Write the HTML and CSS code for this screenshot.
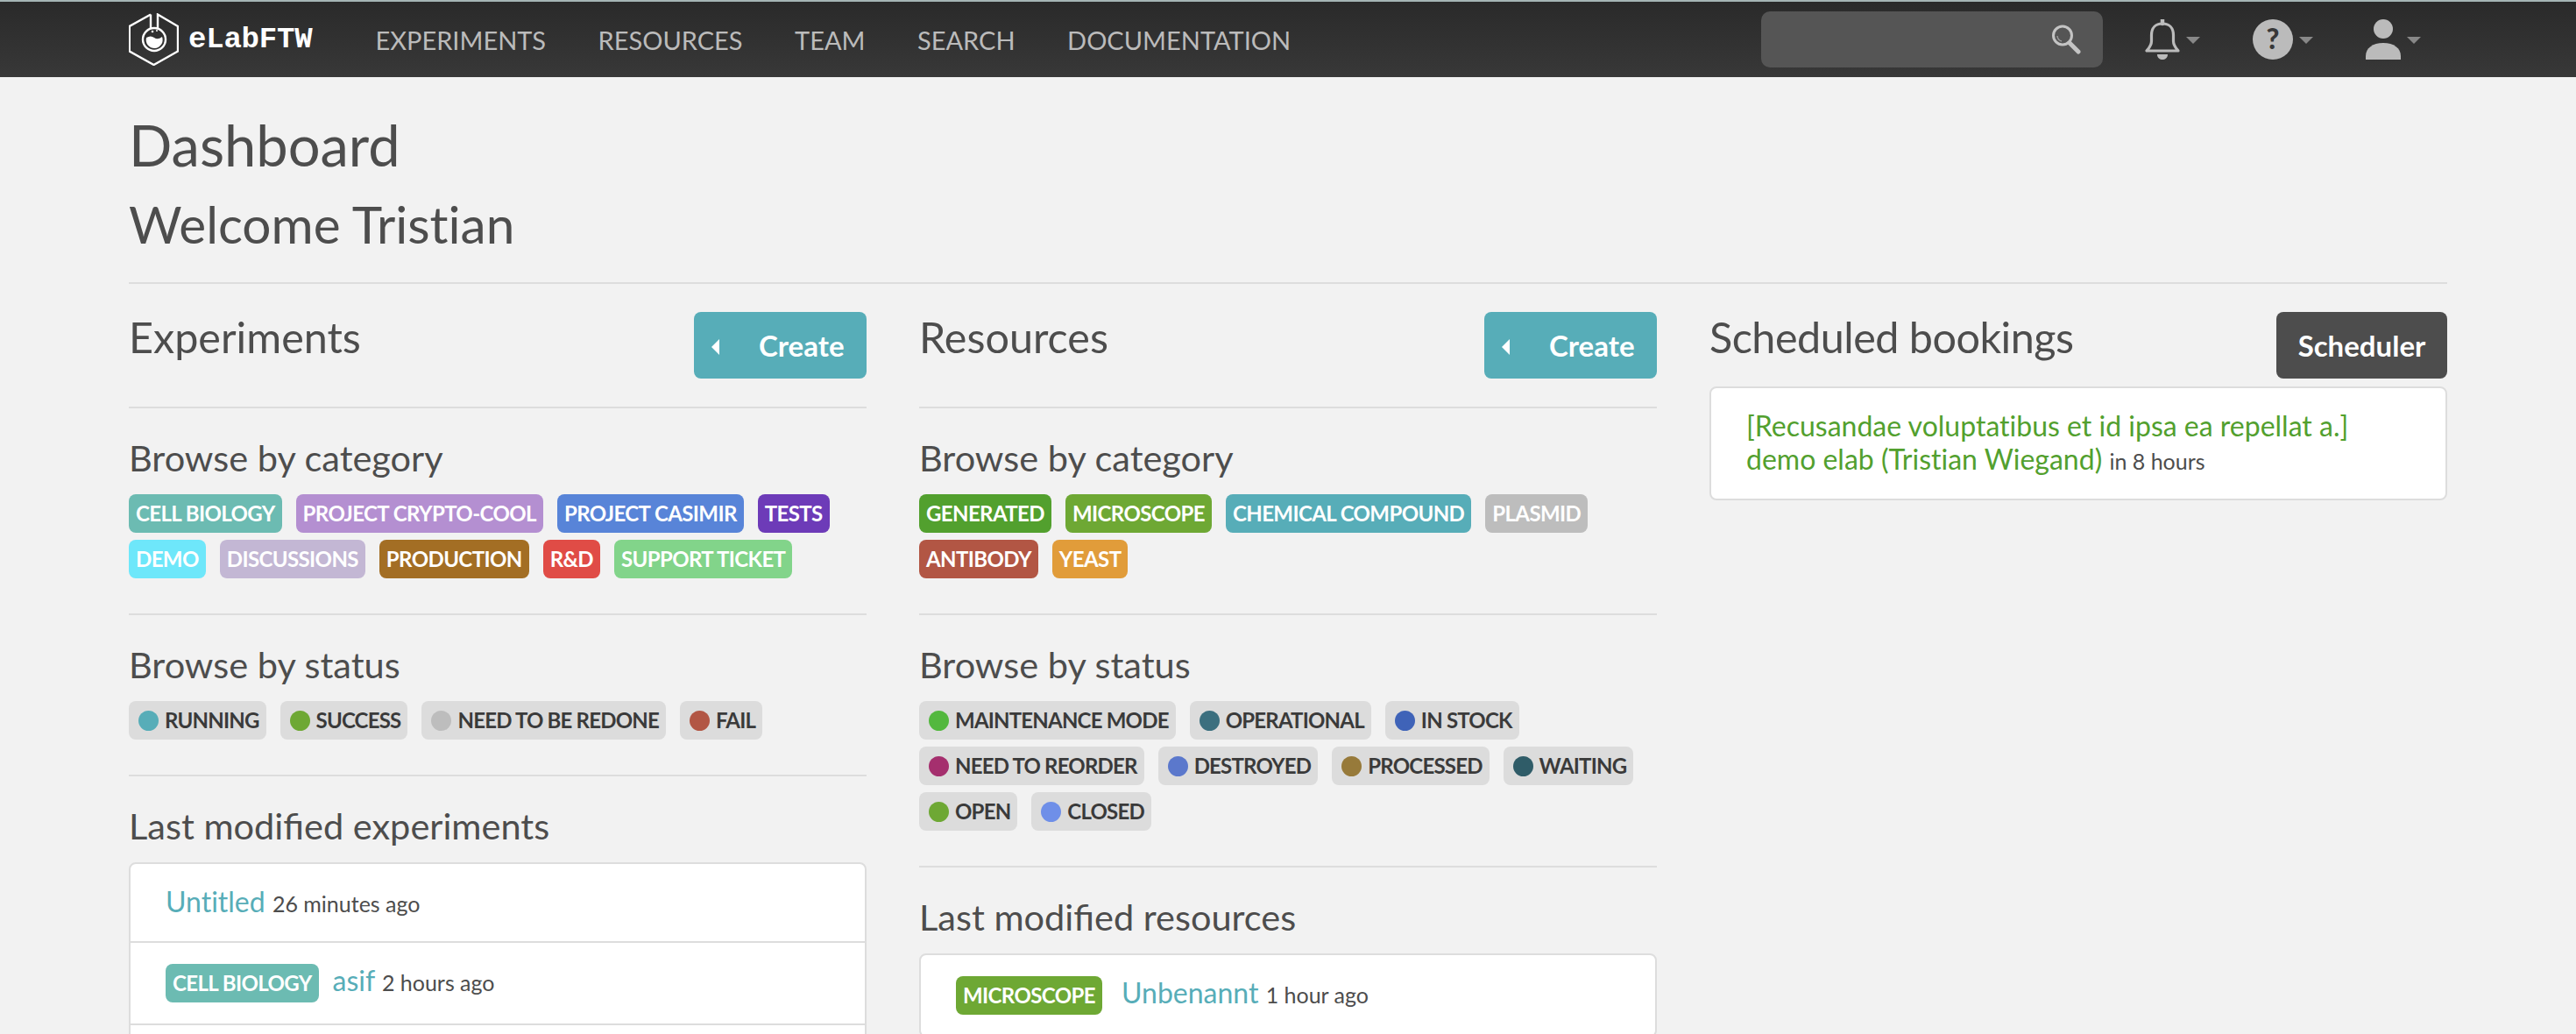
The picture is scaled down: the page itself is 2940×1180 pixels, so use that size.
FILE: index.html
```html
<!DOCTYPE html>
<html lang="en">
<head>
    <meta charset="UTF-8">
    <title>Dashboard - eLabFTW</title>
    <link rel="stylesheet" href="styles.css">
</head>
<body>
    <nav class="navbar">
        <div class="navbar-inner">
            <a class="brand" href="#">
                <svg class="brand-logo" viewBox="0 0 57 60" width="57" height="60" fill="none" stroke="#fff" stroke-width="2.4">
                    <path d="M25 1.5 L0.8 15 V43.5 L28.5 59 L56 43.5 V15 L33 1.5 V18"/>
                    <path d="M25 1.5 V18"/>
                    <circle cx="29" cy="30" r="13"/>
                    <path d="M20 28 Q25 25 29 28 T38 27 A9.5 9.5 0 1 1 20 28 Z" fill="#fff" stroke="none"/>
                    <circle cx="27" cy="21" r="1.3" fill="#fff" stroke="none"/>
                    <circle cx="32" cy="20" r="1" fill="#fff" stroke="none"/>
                </svg>
                <span class="brand-name">eLabFTW</span>
            </a>
            <ul class="nav-links">
                <li><a href="#">EXPERIMENTS</a></li>
                <li><a href="#">RESOURCES</a></li>
                <li><a href="#">TEAM</a></li>
                <li><a href="#">SEARCH</a></li>
                <li><a href="#">DOCUMENTATION</a></li>
            </ul>
            <div class="nav-right">
                <div class="search-box">
                    <svg viewBox="0 0 34 34" width="34" height="34" fill="none" stroke="#c4c4c4">
                        <circle cx="13" cy="12.5" r="10.5" stroke-width="3"/>
                        <path d="M7 13 Q7.500 18 12 19" stroke-width="1.500" stroke="#999"/>
                        <path d="M21 21 L31 31" stroke-width="5" stroke-linecap="round"/>
                    </svg>
                </div>
                <div class="dropdown">
                    <svg viewBox="0 0 40 46" width="40" height="46" fill="none" stroke="#bbb" stroke-width="3.200">
                        <path d="M20 5 C12 5 7.500 10 7.500 18 V25 C7.500 30 4.500 33 2 36 H38 C35.500 33 32.500 30 32.500 25 V18 C32.500 10 28 5 20 5 Z" stroke-linejoin="round"/>
                        <path d="M20 0 V5" stroke-width="4.500" stroke-linecap="round"/>
                        <path d="M14 40 H26 C26 44 23 46 20 46 C17 46 14 44 14 40 Z" fill="#bbb" stroke="none"/>
                    </svg>
                    <span class="caret"></span>
                </div>
                <div class="dropdown">
                    <svg viewBox="0 0 46 46" width="46" height="46">
                        <circle cx="23" cy="23" r="23" fill="#bbb"/>
                        <text x="23" y="34" text-anchor="middle" class="help-mark">?</text>
                    </svg>
                    <span class="caret"></span>
                </div>
                <div class="dropdown">
                    <svg viewBox="0 0 40 46" width="40" height="46" fill="#bbb">
                        <ellipse cx="20" cy="11" rx="11" ry="11"/>
                        <path d="M0 46 V42 C0 33 8 27 20 27 C32 27 40 33 40 42 V46 Z"/>
                    </svg>
                    <span class="caret"></span>
                </div>
            </div>
        </div>
    </nav>

    <main class="container">
        <h1 class="page-title">Dashboard</h1>
        <h2 class="welcome">Welcome Tristian</h2>

        <div class="columns">
            <div class="col">
                <section class="section section-head">
                    <h3 class="col-title">Experiments</h3>
                    <a class="btn btn-create" href="#"><span class="caret-left"></span>Create</a>
                </section>
                <section class="section">
                    <h4 class="sub-title">Browse by category</h4>
                    <div class="badges">
                        <a class="badge c-cell" href="#">CELL BIOLOGY</a>
                        <a class="badge c-crypto" href="#">PROJECT CRYPTO-COOL</a>
                        <a class="badge c-casimir" href="#">PROJECT CASIMIR</a>
                        <a class="badge c-tests" href="#">TESTS</a>
                        <a class="badge c-demo" href="#">DEMO</a>
                        <a class="badge c-discussions" href="#">DISCUSSIONS</a>
                        <a class="badge c-production" href="#">PRODUCTION</a>
                        <a class="badge c-rd" href="#">R&amp;D</a>
                        <a class="badge c-support" href="#">SUPPORT TICKET</a>
                    </div>
                </section>
                <section class="section">
                    <h4 class="sub-title">Browse by status</h4>
                    <div class="badges">
                        <a class="status" href="#"><span class="dot d-teal"></span>RUNNING</a>
                        <a class="status" href="#"><span class="dot d-leaf"></span>SUCCESS</a>
                        <a class="status" href="#"><span class="dot d-grey"></span>NEED TO BE REDONE</a>
                        <a class="status" href="#"><span class="dot d-brick"></span>FAIL</a>
                    </div>
                </section>
                <section class="section section-last">
                    <h4 class="sub-title">Last modified experiments</h4>
                    <ul class="list">
                        <li class="list-item"><a class="item-link" href="#">Untitled</a> <span class="item-time">26 minutes ago</span></li>
                        <li class="list-item"><a class="badge c-cell" href="#">CELL BIOLOGY</a><a class="item-link" href="#">asif</a> <span class="item-time">2 hours ago</span></li>
                        <li class="list-item list-item-empty"></li>
                    </ul>
                </section>
            </div>

            <div class="col">
                <section class="section section-head">
                    <h3 class="col-title">Resources</h3>
                    <a class="btn btn-create" href="#"><span class="caret-left"></span>Create</a>
                </section>
                <section class="section">
                    <h4 class="sub-title">Browse by category</h4>
                    <div class="badges">
                        <a class="badge c-generated" href="#">GENERATED</a>
                        <a class="badge c-microscope" href="#">MICROSCOPE</a>
                        <a class="badge c-chemical" href="#">CHEMICAL COMPOUND</a>
                        <a class="badge c-plasmid" href="#">PLASMID</a>
                        <a class="badge c-antibody" href="#">ANTIBODY</a>
                        <a class="badge c-yeast" href="#">YEAST</a>
                    </div>
                </section>
                <section class="section">
                    <h4 class="sub-title">Browse by status</h4>
                    <div class="badges">
                        <a class="status" href="#"><span class="dot d-green"></span>MAINTENANCE MODE</a>
                        <a class="status" href="#"><span class="dot d-petrol"></span>OPERATIONAL</a>
                        <a class="status" href="#"><span class="dot d-blue"></span>IN STOCK</a>
                        <a class="status" href="#"><span class="dot d-plum"></span>NEED TO REORDER</a>
                        <a class="status" href="#"><span class="dot d-indigo"></span>DESTROYED</a>
                        <a class="status" href="#"><span class="dot d-ochre"></span>PROCESSED</a>
                        <a class="status" href="#"><span class="dot d-deep"></span>WAITING</a>
                        <a class="status" href="#"><span class="dot d-leaf"></span>OPEN</a>
                        <a class="status" href="#"><span class="dot d-sky"></span>CLOSED</a>
                    </div>
                </section>
                <section class="section section-last">
                    <h4 class="sub-title">Last modified resources</h4>
                    <ul class="list">
                        <li class="list-item"><a class="badge c-microscope" href="#">MICROSCOPE</a><a class="item-link" href="#">Unbenannt</a> <span class="item-time">1 hour ago</span></li>
                    </ul>
                </section>
            </div>

            <div class="col">
                <section class="section section-head section-head-plain">
                    <h3 class="col-title">Scheduled bookings</h3>
                    <a class="btn btn-dark" href="#">Scheduler</a>
                </section>
                <div class="list">
                    <div class="list-item">
                        <a class="item-link item-link-green" href="#">[Recusandae voluptatibus et id ipsa ea repellat a.]<br>demo elab (Tristian Wiegand)</a> <span class="item-time">in 8 hours</span>
                    </div>
                </div>
            </div>
        </div>
    </main>
</body>
</html>
```

FILE: styles.css
```css
body {
    margin: 0;
    font-family: "Lato", "Open Sans", sans-serif;
    font-variant-ligatures: none;
    background-color: #f2f2f2;
    color: #4d4d4d;
}
a {
    text-decoration: none;
}
h1, h2, h3, h4, ul {
    margin: 0;
    padding: 0;
    font-weight: 400;
    list-style: none;
}

/* top bar */
.navbar {
    height: 86px;
    border-top: 2px solid #a5b5b5;
    background: linear-gradient(#2a2a2a, #383838);
}
.navbar-inner {
    width: 2646px;
    height: 86px;
    margin: 0 auto;
    display: flex;
    align-items: center;
}
.brand {
    display: flex;
    align-items: center;
    gap: 11px;
    color: #fff;
}
.brand-name {
    font-family: "Liberation Mono", monospace;
    font-weight: 700;
    font-size: 34px;
    letter-spacing: -0.2px;
}
.nav-links {
    display: flex;
    gap: 59.5px;
    margin-left: 72px;
}
.nav-links a {
    font-size: 29px;
    color: #bbb;
}
.nav-right {
    display: flex;
    align-items: center;
    margin-left: auto;
    margin-right: 30px;
    gap: 60px;
}
.search-box {
    width: 390px;
    height: 64px;
    box-sizing: border-box;
    padding-right: 25px;
    margin-right: -12px;
    display: flex;
    align-items: center;
    justify-content: flex-end;
    background: #555;
    border-radius: 10px;
}
.dropdown {
    display: flex;
    align-items: center;
    gap: 7px;
}
.caret {
    width: 0;
    height: 0;
    margin-top: 2px;
    border-left: 8px solid transparent;
    border-right: 8px solid transparent;
    border-top: 8px solid #888;
}
.help-mark {
    font-family: "Lato", sans-serif;
    font-weight: 900;
    font-size: 32px;
    fill: #383838;
}

/* page */
.container {
    width: 2646px;
    height: 1051px;
    overflow: hidden;
    margin: 0 auto;
    padding-top: 41px;
}
.page-title {
    font-size: 65px;
    line-height: 72px;
}
.welcome {
    font-size: 58.5px;
    line-height: 64px;
    margin-top: 22px;
    padding-bottom: 35px;
    border-bottom: 2px solid #ddd;
}
.columns {
    display: grid;
    grid-template-columns: repeat(3, 842px);
    gap: 60px;
}

.section {
    padding: 32px 0 40px;
    border-bottom: 2px solid #ddd;
}
.section-head {
    display: flex;
    justify-content: space-between;
    align-items: flex-start;
    padding-bottom: 32px;
}
.section-head-plain {
    padding-bottom: 9px;
    border-bottom: 0;
}
.section-head-plain .col-title {
    letter-spacing: -0.5px;
}
.section-last {
    border-bottom: 0;
    padding-bottom: 0;
}
.col-title {
    font-size: 48.5px;
    line-height: 56px;
}
.sub-title {
    font-size: 41.5px;
    line-height: 48px;
    margin-bottom: 18px;
    font-variant-ligatures: normal;
}

.btn {
    height: 76px;
    box-sizing: border-box;
    display: flex;
    align-items: center;
    font-size: 33px;
    font-weight: 700;
    color: #fff;
    border-radius: 8px;
}
.btn-create {
    width: 197px;
    padding: 0 26px 0 20px;
    gap: 45px;
    background: #57adb8;
}
.btn-dark {
    width: 195px;
    justify-content: center;
    background: #4d4d4d;
}
.caret-left {
    width: 0;
    height: 0;
    border-top: 9px solid transparent;
    border-bottom: 9px solid transparent;
    border-right: 9px solid #fff;
    margin-top: 4px;
}

/* badges */
.badges {
    display: flex;
    flex-wrap: wrap;
    gap: 8px 16px;
}
.badge, .status {
    height: 44px;
    line-height: 44px;
    font-size: 24px;
    font-weight: 700;
    border-radius: 8px;
    box-sizing: border-box;
}
.badge {
    display: inline-block;
    padding: 0 8px;
    color: #fff;
    letter-spacing: -0.6px;
}
.status {
    display: inline-flex;
    align-items: center;
    padding: 0 8px 0 11px;
    background: #dcdcdc;
    color: #3a3a3a;
    letter-spacing: -0.8px;
}
.dot {
    width: 23px;
    height: 23px;
    margin-right: 7px;
    border-radius: 50%;
}

.c-cell { background: #6cbbb2; }
.c-crypto { background: #b48fd1; }
.c-casimir { background: #5884d8; }
.c-tests { background: #6d3bb8; }
.c-demo { background: #6ee7fa; }
.c-discussions { background: #c3b7d4; }
.c-production { background: #a36e24; }
.c-rd { background: #e04c46; }
.c-support { background: #82d48a; }
.c-generated { background: #52a02e; }
.c-microscope { background: #6ea834; }
.c-chemical { background: #57adb8; }
.c-plasmid { background: #bdbdbd; }
.c-antibody { background: #b25644; }
.c-yeast { background: #e19c3a; }

.d-teal { background: #57adb8; }
.d-leaf { background: #6ea834; }
.d-grey { background: #bdbdbd; }
.d-brick { background: #b25644; }
.d-green { background: #53b83e; }
.d-petrol { background: #3b6f7f; }
.d-blue { background: #3f63b8; }
.d-plum { background: #a52f6e; }
.d-indigo { background: #5b78cc; }
.d-ochre { background: #977a3a; }
.d-deep { background: #2f5c68; }
.d-sky { background: #6f8fe8; }

/* lists */
.list {
    background: #fff;
    border: 2px solid #ddd;
    border-radius: 8px;
}
.list-item {
    padding: 24px 40px;
    font-size: 32px;
    line-height: 38px;
    border-bottom: 2px solid #ddd;
}
.list-item:last-child {
    border-bottom: 0;
}
.list-item-empty {
    height: 80px;
}
.list-item .badge {
    margin-right: 16px;
}
.list-item .c-microscope {
    margin-right: 22px;
}
.item-link {
    color: #57adb8;
}
.item-link-green {
    color: #52a02e;
}
.item-time {
    font-size: 25px;
    color: #4d4d4d;
}
```
